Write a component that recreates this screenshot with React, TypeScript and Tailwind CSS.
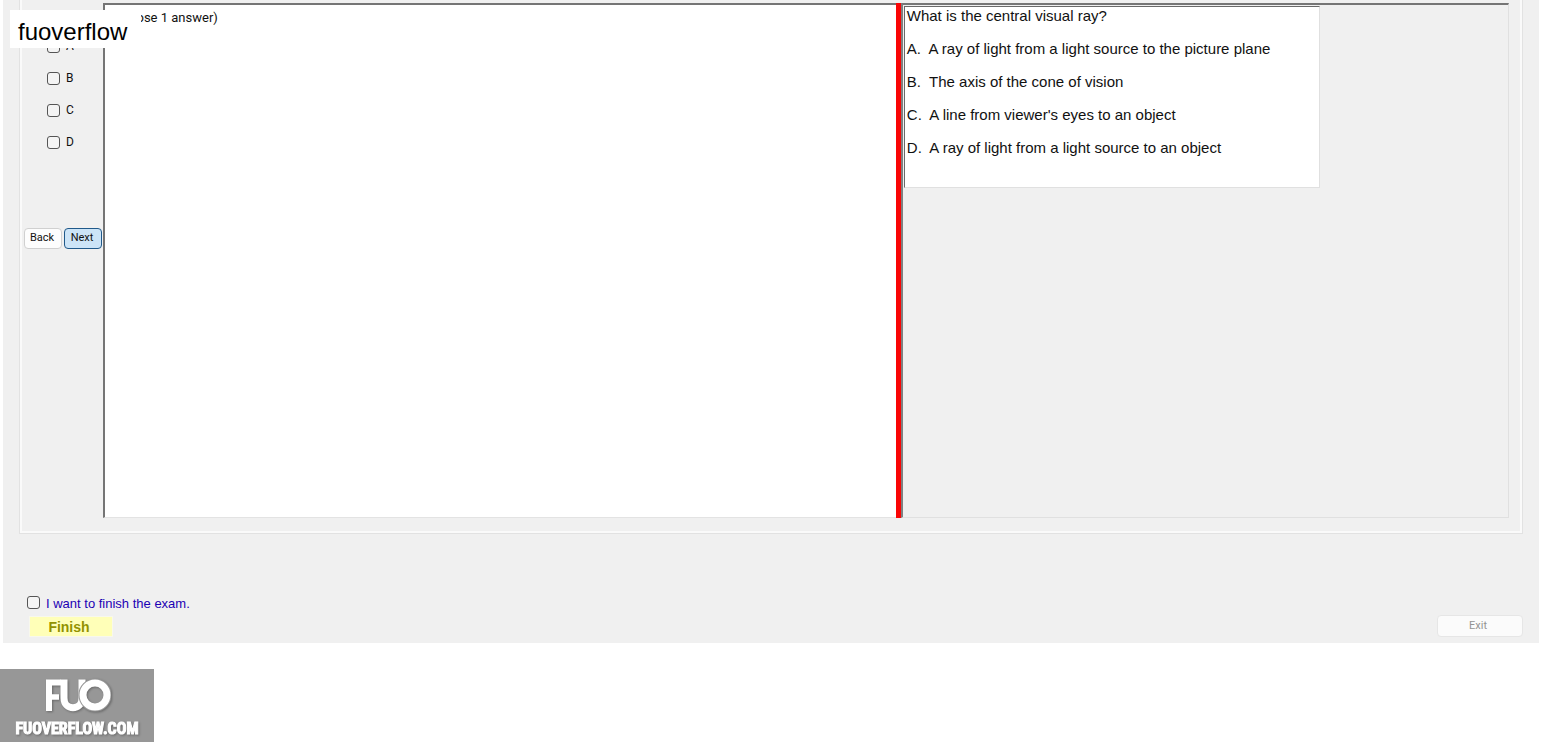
import { useState } from "react";
import clsx from "clsx";

const CHOICES = ["A", "B", "C", "D"];

const ANSWERS = [
  { key: "A", text: "A ray of light from a light source to the picture plane" },
  { key: "B", text: "The axis of the cone of vision" },
  { key: "C", text: "A line from viewer's eyes to an object" },
  { key: "D", text: "A ray of light from a light source to an object" },
];

const checkboxClass =
  "appearance-none size-[13px] shrink-0 rounded-[3px] border border-[#555] bg-[#f4f4f4] checked:bg-[#0067c0]";

function Sidebar() {
  const [selected, setSelected] = useState<string | null>(null);

  return (
    <aside className="w-20 shrink-0 pt-[35px] font-[Roboto,sans-serif] text-xs text-[#111]">
      <div className="flex flex-col gap-4 pl-6">
        {CHOICES.map((choice) => (
          <label key={choice} className="flex h-4 items-center gap-1.5">
            <input
              type="checkbox"
              className={checkboxClass}
              checked={selected === choice}
              onChange={() => setSelected(selected === choice ? null : choice)}
            />
            {choice}
          </label>
        ))}
      </div>
      <div className="mt-[78px] flex gap-0.5 pl-px text-[11px]">
        <button type="button" className="h-[21px] w-[38px] rounded-[4px] border border-[#d0d0d0] bg-[#fdfdfd] pr-0.5">
          Back
        </button>
        <button type="button" className="h-[21px] w-[38px] rounded-[4px] border border-[#20598a] bg-[#cce4f7] pr-0.5">
          Next
        </button>
      </div>
    </aside>
  );
}

function Question() {
  return (
    <div className="ml-px mt-px h-[182px] w-[416px] max-w-full border border-[#e0e0e0] border-l-[#696969] border-t-[#696969] bg-white pl-0.5 text-[15px] leading-[18px] text-[#111]">
      <p>What is the central visual ray?</p>
      <ol className="mt-[15px] flex flex-col gap-[15px]">
        {ANSWERS.map((a) => (
          <li key={a.key} className="whitespace-pre">
            {a.key}.{"  "}{a.text}
          </li>
        ))}
      </ol>
    </div>
  );
}

function Logo() {
  return (
    <div className="flex h-[73px] w-[154px] flex-col items-center bg-[#979797] pt-2 text-white">
      <svg width="68" height="36" viewBox="0 0 68 36" fill="none" className="drop-shadow-[1px_1px_1px_rgba(0,0,0,0.3)]" aria-hidden="true">
        <path d="M6 34V5.5H18" stroke="#fff" strokeWidth="6" />
        <path d="M6 20H16" stroke="#fff" strokeWidth="5.5" />
        <path d="M21 2.5V21C21 34 39 34 39 21V2.5" stroke="#fff" strokeWidth="7" />
        <circle cx="52" cy="18" r="13.8" stroke="#979797" strokeWidth="5.5" />
        <circle cx="52" cy="18" r="12" stroke="#fff" strokeWidth="7" />
      </svg>
      <span className="mt-1 font-['Liberation_Sans_Narrow','Roboto_Condensed','Liberation_Sans',sans-serif] text-base font-bold leading-6 drop-shadow-[1px_1px_1px_rgba(0,0,0,0.3)] [-webkit-text-stroke:1px_white]">
        FUOVERFLOW.COM
      </span>
    </div>
  );
}

export default function App() {
  const [finish, setFinish] = useState(false);

  return (
    <div className="relative min-h-screen bg-white font-['Liberation_Sans',Arial,sans-serif]">
      <main className="mx-[3px] bg-[#f0f0f0] px-4 pb-1.5">
        {/* Exam group box */}
        <section className="border-x border-b border-[#e2e2e2]">
          <div className="flex border-x-2 border-b-2 border-[#fafafa] pb-[13px] pl-px pr-[11px] pt-[3px]">
            <Sidebar />
            <div className="flex min-h-[515px] min-w-0 flex-1">
              <div className="min-w-0 flex-[793] border-b border-l-2 border-t-2 border-b-[#e3e3e3] border-l-[#757575] border-t-[#757575] bg-white pl-1 pt-[5px]">
                <p className="font-[Roboto,sans-serif] text-[13px] leading-4 text-[#111]">(Choose 1 answer)</p>
              </div>
              <div className="w-[5px] shrink-0 bg-[#fa0505]" />
              <div className="min-w-0 flex-[610] border-b border-l-2 border-r border-t-2 border-b-[#e0e0e0] border-l-[#808080] border-r-[#e0e0e0] border-t-[#757575]">
                <Question />
              </div>
            </div>
          </div>
        </section>

        {/* Finish / exit row */}
        <footer className="mt-[62px] flex items-end justify-between">
          <div>
            <label className="ml-2 flex h-4 items-start gap-1.5 text-[13px] leading-4 text-[#1c00b4]">
              <input
                type="checkbox"
                className={checkboxClass}
                checked={finish}
                onChange={(e) => setFinish(e.target.checked)}
              />
              I want to finish the exam.
            </label>
            <button
              type="button"
              className={clsx(
                "ml-2.5 mt-1 block h-[21px] w-[84px] border border-[#f8f8ec] bg-[#ffffb8] pr-1 text-sm font-bold leading-[18px]",
                finish ? "text-[#5c5c00]" : "text-[#929200]"
              )}
            >
              Finish
            </button>
          </div>
          <button
            type="button"
            className="h-[22px] w-[86px] rounded-[4px] border border-[#e6e6e6] bg-[#fbfbfb] pr-1 font-[Roboto,sans-serif] text-[11px] text-[#949494]"
          >
            Exit
          </button>
        </footer>
      </main>

      <div className="mt-[26px]">
        <Logo />
      </div>

      {/* Watermark over the top left corner */}
      <div className="absolute left-2.5 top-2.5 h-[38px] w-[131px] bg-white pl-2 pt-1.5 text-2xl leading-8 text-black">
        fuoverflow
      </div>
    </div>
  );
}
